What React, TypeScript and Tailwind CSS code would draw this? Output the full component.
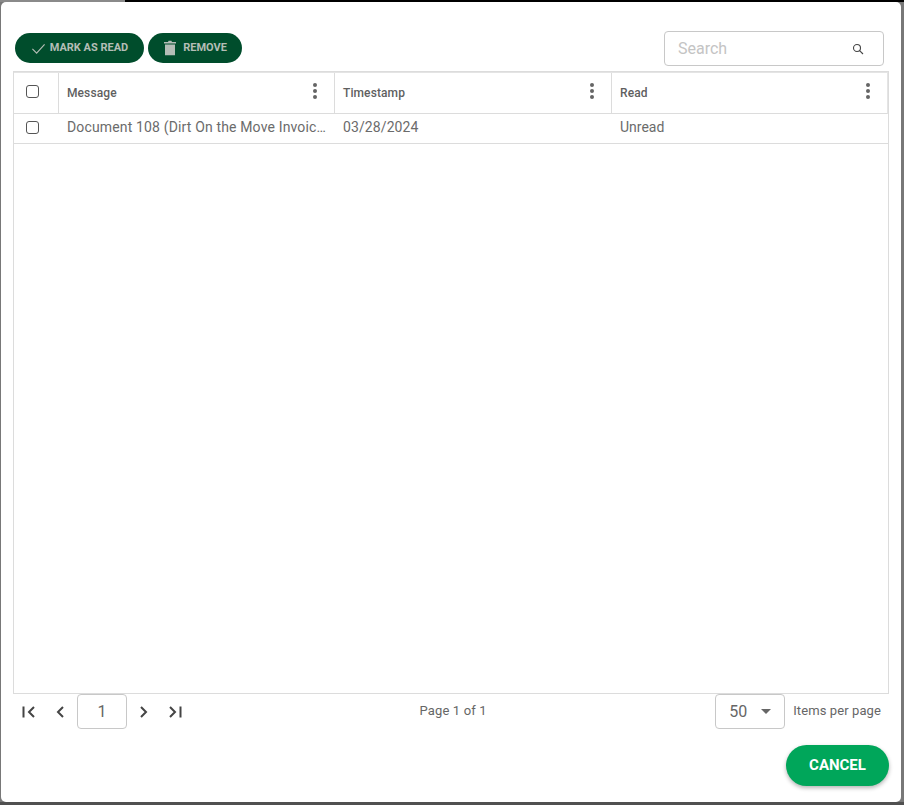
import React from "react";

const Dots = () => (
  <svg width="4" height="16" viewBox="0 0 4 16" className="absolute right-[17px] top-[10px] text-[#656565]" fill="currentColor">
    <circle cx="2" cy="2" r="2" />
    <circle cx="2" cy="8" r="2" />
    <circle cx="2" cy="14" r="2" />
  </svg>
);

const Box = () => <span className="block h-[13px] w-[13px] rounded-[3px] border border-[#555] bg-white" />;

const Nav = ({ d }: { d: string }) => (
  <svg width="16" height="16" viewBox="0 0 16 16" fill="none" stroke="#444" strokeWidth="2">
    <path d={d} />
  </svg>
);

export default function App() {
  return (
    <div className="flex h-[805px] w-[904px] flex-col overflow-hidden bg-[#787878] font-['Roboto',sans-serif]">
      <div className="flex h-[2px] shrink-0">
        <div className="w-[125px] bg-[#8a8a8a]" />
        <div className="flex-1 bg-black" />
      </div>
      <div className="ml-[1px] flex h-[800px] w-[900px] shrink-0 flex-col rounded-[5px] bg-white pl-[12px] pr-[12px]">
        <div className="flex items-start justify-between pl-[2px] pr-[5px] pt-[29px]">
          <div className="mt-[2px] flex gap-[4px]">
            <button className="flex h-[30px] w-[129px] items-center justify-center gap-[4px] rounded-full bg-[#004d2c] text-[11px] font-bold text-[#b4bdb6]">
              <svg width="15" height="15" viewBox="0 0 16 16" fill="none" stroke="#b4bdb6" strokeWidth="1.2"><path d="M1.5 8.5l4.5 4.5L14.5 3.5" /></svg>
              MARK AS READ
            </button>
            <button className="flex h-[30px] w-[94px] items-center justify-center gap-[6px] rounded-full bg-[#004d2c] text-[11px] font-bold text-[#b4bdb6]">
              <svg width="14" height="16" viewBox="0 0 14 16" fill="#b4bdb6"><path d="M1 2h4l.6-1.2h2.8L9 2h4v1.5H1zM2 4.4h10V15.2H2z" /></svg>
              REMOVE
            </button>
          </div>
          <div className="flex h-[35px] w-[220px] items-center justify-between rounded-[4px] border border-[#c8c8c8] pl-[13px] pr-[19px] text-[16px] text-[#c4c4c4]">
            <span>Search</span>
            <svg width="12" height="12" viewBox="0 0 12 12" fill="none" stroke="#444" strokeWidth="1.1"><circle cx="5" cy="5" r="3.5" /><path d="M7.6 7.6L11 11" /></svg>
          </div>
        </div>

        <div className="mt-[5px] flex h-[623px] flex-col border border-[#dcdcdc]">
          <div className="flex h-[42px] border-b border-r border-t border-[#dcdcdc] border-t-[#e4e4e4] border-r-[#e4e4e4] text-[12px] font-medium tracking-[0.1px] text-[#5f5f5f]">
            <div className="flex w-[45px] items-center border-r border-[#dcdcdc] pb-[4px] pl-[12px]"><Box /></div>
            <div className="relative flex w-[276px] items-center border-r border-[#dcdcdc] pl-[8px]">Message<Dots /></div>
            <div className="relative flex w-[277px] items-center border-r border-[#dcdcdc] pl-[8px]">Timestamp<Dots /></div>
            <div className="relative flex flex-1 items-center pl-[8px]">Read<Dots /></div>
          </div>
          <div className="flex h-[30px] border-b border-[#dcdcdc] text-[14px] text-[#6b6b6b]">
            <div className="flex w-[45px] items-center pb-[2px] pl-[12px]"><Box /></div>
            <div className="w-[276px] truncate pl-[8px] pr-[8px] leading-[27px] tracking-[0.15px]">Document 108 (Dirt On the Move Invoice)</div>
            <div className="w-[277px] pl-[8px] leading-[27px] tracking-[0.1px]">03/28/2024</div>
            <div className="flex-1 pl-[8px] leading-[27px]">Unread</div>
          </div>
        </div>

        <div className="flex h-[35px] items-center justify-between pl-[8px] pr-[8px]">
          <div className="flex items-center">
            <Nav d="M2.5 2.5v11M13 3L8 8l5 5" />
            <span className="w-[16px]" />
            <Nav d="M10 3L5 8l5 5" />
            <span className="w-[8px]" />
            <div className="flex h-[35px] w-[50px] items-center justify-center rounded-[4px] border border-[#c8c8c8] text-[16px] text-[#666]">1</div>
            <span className="w-[8px]" />
            <Nav d="M6 3l5 5-5 5" />
            <span className="w-[16px]" />
            <Nav d="M3 3l5 5-5 5M13.5 2.5v11" />
          </div>
          <div className="mb-[2px] ml-[8px] text-[13px] tracking-[0.15px] text-[#666]">Page 1 of 1</div>
          <div className="flex items-center">
            <div className="flex h-[35px] w-[70px] items-center rounded-[4px] border border-[#c8c8c8] pl-[13px] text-[16px] text-[#666]">
              50
              <span className="ml-[14px] h-0 w-0 border-x-[5px] border-t-[5px] border-x-transparent border-t-[#666]" />
            </div>
            <span className="mb-[2px] ml-[8px] text-[13px] tracking-[0.1px] text-[#666]">Items per page</span>
          </div>
        </div>

        <div className="mt-[16px] flex justify-end">
          <button className="h-[41px] w-[103px] rounded-full bg-[#00a65a] text-[15px] font-bold text-white shadow-[0_2px_4px_rgba(0,0,0,0.3)]">CANCEL</button>
        </div>
      </div>
      <div className="flex-1 bg-[#505050]" />
    </div>
  );
}
